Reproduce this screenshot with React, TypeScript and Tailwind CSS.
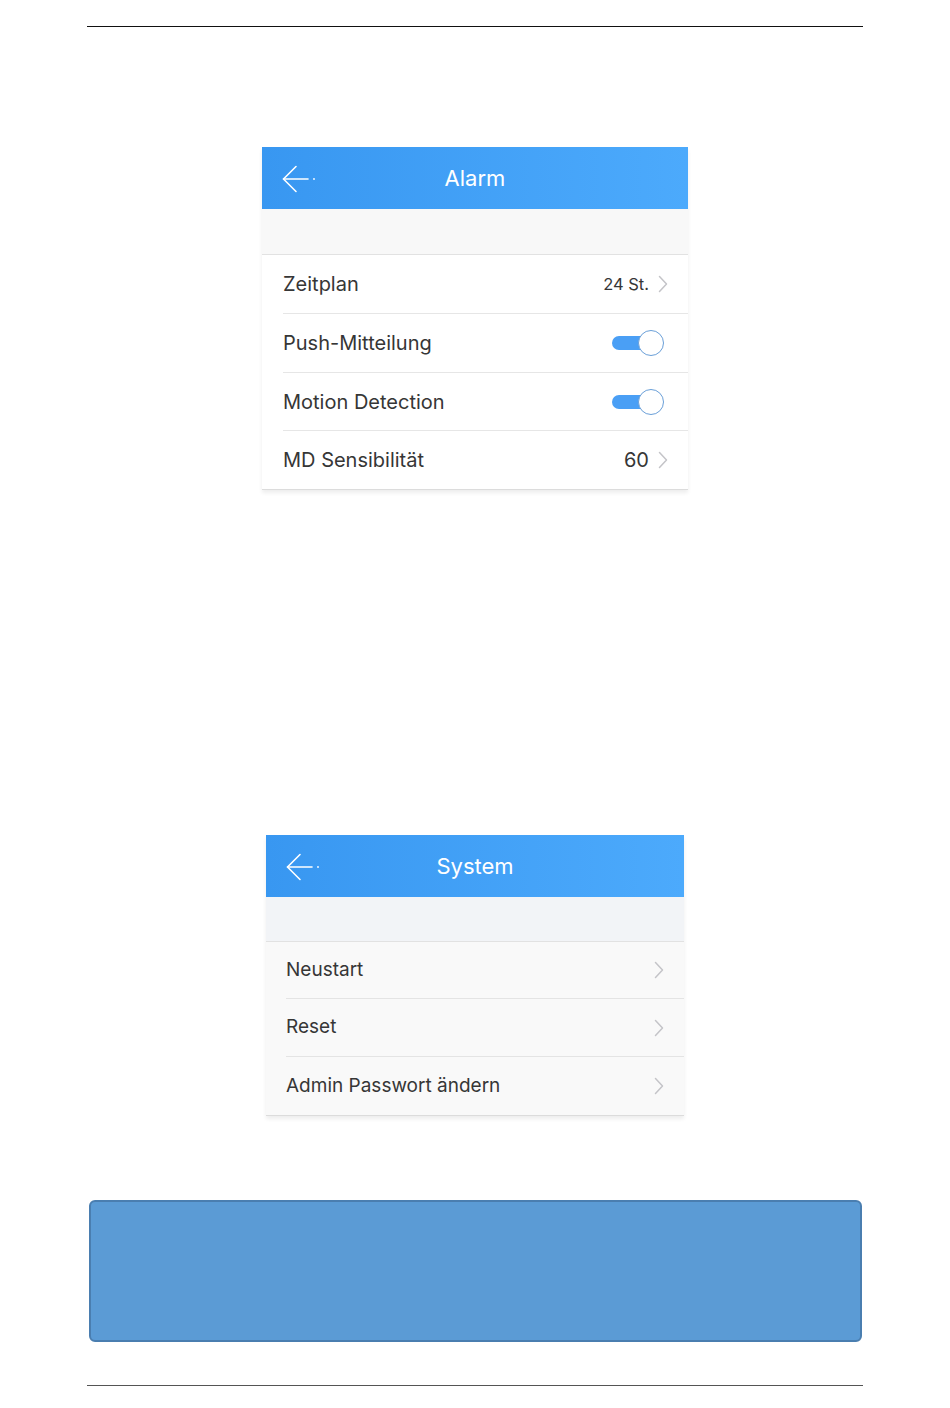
import React from 'react';

function BackArrow() {
  return (
    <svg width="36" height="28" viewBox="0 0 36 28" fill="none" stroke="white" strokeWidth="1.6" strokeLinecap="round" strokeLinejoin="round">
      <path d="M14 1.5 L1.5 14 L14 26.5" />
      <path d="M1.5 14 H26" />
      <circle cx="32" cy="14" r="0.9" fill="white" stroke="none" />
    </svg>
  );
}

function Chevron() {
  return (
    <svg width="10" height="18" viewBox="0 0 10 18" fill="none" stroke="#c4c4c8" strokeWidth="1.5" strokeLinecap="round" strokeLinejoin="round">
      <path d="M1.5 1.5 L8.5 9 L1.5 16.5" />
    </svg>
  );
}

function Toggle() {
  return (
    <div className="relative w-[52px] h-[26px] flex items-center">
      <div className="h-[14px] w-[40px] rounded-full bg-[#4a9ff5]" />
      <div className="absolute right-0 top-0 w-[26px] h-[26px] rounded-full bg-white border border-[#6a9fd8]" />
    </div>
  );
}

function Header({ title }: { title: string }) {
  return (
    <div className="relative h-[62px] flex items-center justify-center bg-gradient-to-r from-[#3897f1] to-[#4caafc]">
      <div className="absolute left-[20px] top-[18px]">
        <BackArrow />
      </div>
      <span className="text-white text-[22px]">{title}</span>
    </div>
  );
}

const systemRows = [
  { label: 'Neustart', h: 'h-[57px]' },
  { label: 'Reset', h: 'h-[58px]' },
  { label: 'Admin Passwort ändern', h: 'h-[58px]' },
];

function App() {
  const font = { fontFamily: 'Inter, "Noto Sans", sans-serif' };

  return (
    <div className="w-[950px] h-[1408px] bg-white flex flex-col" style={font}>
      <div className="mt-[26px] mx-[87px] h-[1px] bg-[#111]" />

      {/* Alarm */}
      <div className="mt-[120px] mx-auto w-[426px] shadow-[0_3px_4px_rgba(0,0,0,0.07)]">
        <Header title="Alarm" />
        <div className="h-[46px] bg-[#f8f8f8] border-b border-[#e2e2e2]" />
        <div className="bg-white text-[#363636]">
          <div className="h-[59px] flex items-center pr-[20px] ml-[21px] border-b border-[#e6e6e6]">
            <span className="flex-1 text-[20px]">Zeitplan</span>
            <span className="text-[16.5px] mr-[9px]">24 St.</span>
            <Chevron />
          </div>
          <div className="h-[59px] flex items-center pr-[24px] ml-[21px] border-b border-[#e6e6e6]">
            <span className="flex-1 text-[20px]">Push-Mitteilung</span>
            <Toggle />
          </div>
          <div className="h-[58px] flex items-center pr-[24px] ml-[21px] border-b border-[#e6e6e6]">
            <span className="flex-1 text-[20px]">Motion Detection</span>
            <Toggle />
          </div>
          <div className="h-[58px] flex items-center pr-[20px] ml-[21px]">
            <span className="flex-1 text-[20px]">MD Sensibilität</span>
            <span className="text-[20px] mr-[9px]">60</span>
            <Chevron />
          </div>
        </div>
        <div className="h-[1px] bg-[#dcdcdc]" />
      </div>

      {/* System */}
      <div className="mt-[345px] mx-auto w-[418px] shadow-[0_3px_4px_rgba(0,0,0,0.07)]">
        <Header title="System" />
        <div className="h-[45px] bg-[#f2f4f7] border-b border-[#e2e2e2]" />
        <div className="bg-[#f9f9f9] text-[#363636]">
          {systemRows.map((row, i) => (
            <div
              key={row.label}
              className={`${row.h} flex items-center pr-[20px] ml-[20px] ${i < 2 ? 'border-b border-[#e4e4e4]' : ''}`}
            >
              <span className="flex-1 text-[19px]">{row.label}</span>
              <Chevron />
            </div>
          ))}
        </div>
        <div className="h-[1px] bg-[#dcdcdc]" />
      </div>

      <div className="mt-[84px] mx-auto w-[773px] h-[142px] rounded-[6px] bg-[#5b9bd5] border-2 border-[#4a7eb0]" />

      <div className="mt-[43px] mx-[87px] h-[1px] bg-[#555]" />
    </div>
  );
}

export default App;
